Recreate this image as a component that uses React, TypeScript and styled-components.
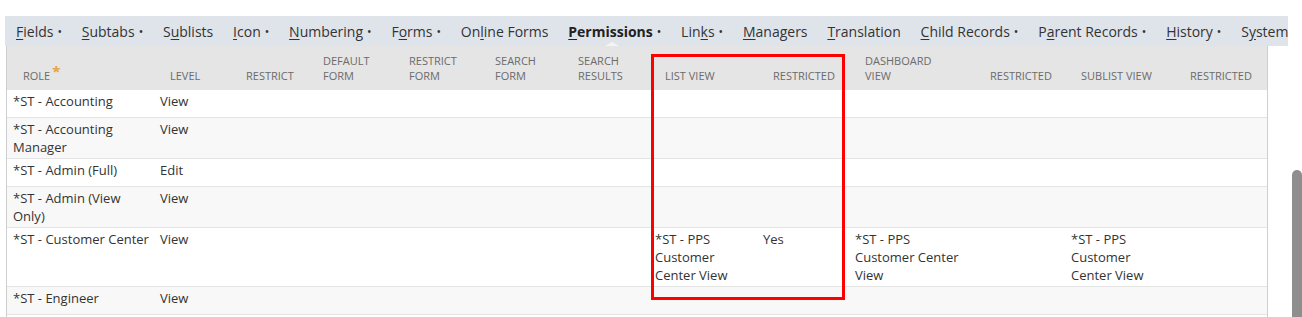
import React from "react";
import styled, { createGlobalStyle } from "styled-components";

const Global = createGlobalStyle`
  html, body { margin: 0; padding: 0; background: #ffffff; }
  body { font-family: "Open Sans", "Noto Sans", sans-serif; color: #333; overflow: hidden; }
`;

const Page = styled.div`
  display: flex;
  width: 1302px;
  height: 317px;
  overflow: hidden;
  position: relative;
`;

const Main = styled.div`
  padding: 16px 0 0 5px;
  width: 1283px;
  display: flex;
  flex-direction: column;
`;

const ScrollTrack = styled.div`
  flex: 1;
  display: flex;
  justify-content: flex-end;
  padding-top: 170px;
`;

const Thumb = styled.div`
  width: 10px;
  height: 200px;
  background: #8e8e8e;
  border-radius: 5px 5px 0 0;
`;

const TabBar = styled.div`
  height: 30px;
  flex: 0 0 30px;
  box-sizing: border-box;
  padding: 1px 0 0 11px;
  background: #dfe4eb;
  display: flex;
  align-items: center;
  gap: 19.85px;
  white-space: nowrap;
  overflow: hidden;
  position: relative;
`;

const Tab = styled.span<{ $active?: boolean }>`
  font-size: 14px;
  line-height: 20px;
  color: ${(p) => (p.$active ? "#222" : "#333")};
  font-weight: ${(p) => (p.$active ? 700 : 400)};
  position: relative;
  flex-shrink: 0;
`;

const Key = styled.span`
  text-decoration: underline;
  text-underline-offset: 2px;
`;

const Dot = styled.span`
  font-size: 12px;
  line-height: 12px;
  font-weight: 400;
  margin-left: 4px;
  vertical-align: 1px;
`;

const Caret = styled.span`
  position: absolute;
  left: 35px;
  bottom: -5px;
  width: 0;
  height: 0;
  border-left: 9px solid transparent;
  border-right: 9px solid transparent;
  border-bottom: 5px solid #f4f4f4;
`;

const Table = styled.div`
  width: 1262px;
  margin-left: 1px;
  box-sizing: border-box;
  border-left: 1px solid #cfcfcf;
  border-right: 1px solid #cfcfcf;
  flex: 1;
`;

const cols = "147px 76px 77px 86px 86px 83px 87px 108px 92px 125px 91px 109px 92px";

const HeadRow = styled.div`
  display: grid;
  grid-template-columns: ${cols};
  height: 44px;
  background: #e5e5e5;
`;

const HeadCell = styled.div`
  display: flex;
  align-items: flex-end;
  padding: 0 4px 7px 16px;
  font-size: 11px;
  line-height: 15px;
  color: #6b6b6b;
  text-transform: uppercase;
`;

const Req = styled.span`
  color: #e8a23a;
  font-size: 15px;
  font-weight: 700;
  vertical-align: 3px;
  margin-left: 2px;
  line-height: 0;
`;

const Row = styled.div<{ $alt: boolean }>`
  display: grid;
  grid-template-columns: ${cols};
  min-height: 27px;
  background: ${(p) => (p.$alt ? "#f8f8f8" : "#ffffff")};
  border-bottom: 1px solid #e4e4e4;
`;

const Cell = styled.div`
  padding: 2px 2px 2px 6px;
  font-size: 13px;
  line-height: 18px;
  color: #333;
`;

const Highlight = styled.div`
  position: absolute;
  left: 651px;
  top: 54px;
  width: 194px;
  height: 246px;
  box-sizing: border-box;
  border: 3px solid #ff0000;
  pointer-events: none;
`;

const tabs: { pre: string; key: string; post: string; dot: boolean; active?: boolean }[] = [
  { pre: "", key: "F", post: "ields", dot: true },
  { pre: "", key: "S", post: "ubtabs", dot: true },
  { pre: "S", key: "u", post: "blists", dot: false },
  { pre: "", key: "I", post: "con", dot: true },
  { pre: "", key: "N", post: "umbering", dot: true },
  { pre: "F", key: "o", post: "rms", dot: true },
  { pre: "On", key: "l", post: "ine Forms", dot: false },
  { pre: "", key: "P", post: "ermissions", dot: true, active: true },
  { pre: "Lin", key: "k", post: "s", dot: true },
  { pre: "", key: "M", post: "anagers", dot: false },
  { pre: "", key: "T", post: "ranslation", dot: false },
  { pre: "", key: "C", post: "hild Records", dot: true },
  { pre: "P", key: "a", post: "rent Records", dot: true },
  { pre: "", key: "H", post: "istory", dot: true },
  { pre: "S", key: "y", post: "stem", dot: false },
];

const headers: React.ReactNode[] = [
  <>ROLE<Req>*</Req></>,
  "Level",
  "Restrict",
  <>Default<br />Form</>,
  <>Restrict<br />Form</>,
  <>Search<br />Form</>,
  <>Search<br />Results</>,
  "List View",
  "Restricted",
  <>Dashboard<br />View</>,
  "Restricted",
  "Sublist View",
  "Restricted",
];

const pps = "*ST - PPS Customer Center View";

const rows: string[][] = [
  ["*ST - Accounting", "View"],
  ["*ST - Accounting Manager", "View"],
  ["*ST - Admin (Full)", "Edit"],
  ["*ST - Admin (View Only)", "View"],
  ["*ST - Customer Center", "View", "", "", "", "", "", pps, "Yes", pps, "", pps, ""],
  ["*ST - Engineer", "View"],
];

export default function App() {
  return (
    <>
      <Global />
      <Page>
        <Main>
          <TabBar>
            {tabs.map((t, i) => (
              <Tab key={i} $active={t.active}>
                {t.pre}
                <Key>{t.key}</Key>
                {t.post}
                {t.dot && <Dot>•</Dot>}
                {t.active && <Caret />}
              </Tab>
            ))}
          </TabBar>
          <Table>
            <HeadRow>
              {headers.map((h, i) => (
                <HeadCell key={i}>
                  <span>{h}</span>
                </HeadCell>
              ))}
            </HeadRow>
            {rows.map((r, i) => (
              <Row key={i} $alt={i % 2 === 1}>
                {Array.from({ length: 13 }).map((_, j) => (
                  <Cell key={j}>{r[j] ?? ""}</Cell>
                ))}
              </Row>
            ))}
          </Table>
        </Main>
        <ScrollTrack>
          <Thumb />
        </ScrollTrack>
        <Highlight />
      </Page>
    </>
  );
}
